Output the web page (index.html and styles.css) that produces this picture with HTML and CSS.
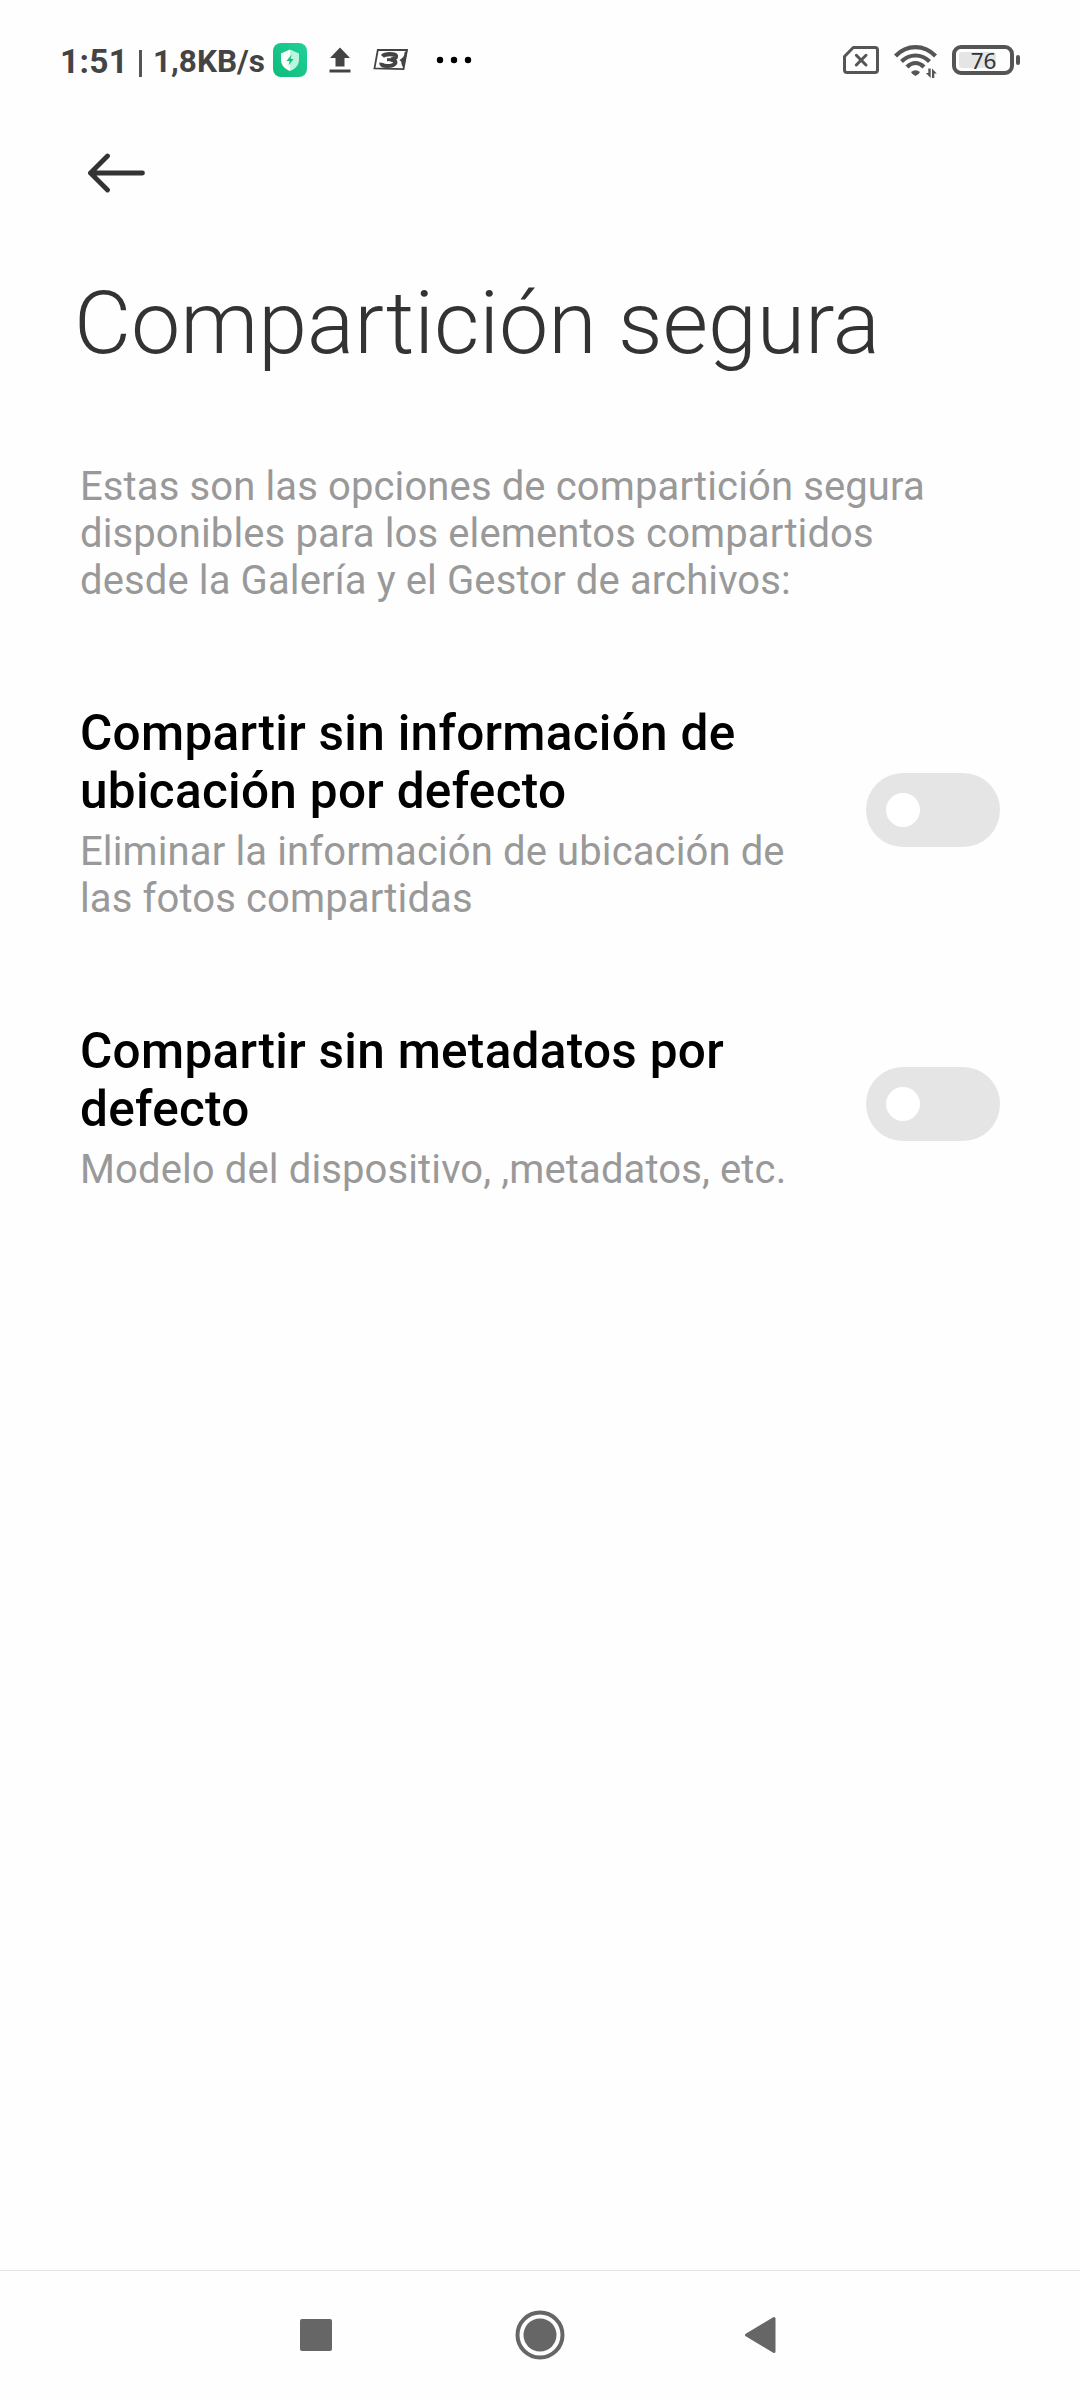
FILE: index.html
```html
<!DOCTYPE html>
<html lang="es">
<head>
<meta charset="utf-8">
<title>Compartición segura</title>
<link rel="stylesheet" href="styles.css">
</head>
<body>
<div class="screen">
  <header class="status">
    <div class="status-left">
      <span class="clock">1:51</span>
      <span class="bar"></span>
      <span class="speed">1,8KB/s</span>
      <svg class="ic-shield" width="34" height="34" viewBox="0 0 34 34">
        <defs><linearGradient id="green" x1="0" y1="1" x2="1" y2="0"><stop offset="0" stop-color="#0dbb78"/><stop offset="1" stop-color="#23d09a"/></linearGradient></defs>
        <rect width="34" height="34" rx="8" fill="url(#green)"/>
        <path d="M17 6.5 L8 10.5 V17 C8 22 12 26 17 28 Z" fill="#fff"/>
        <path d="M17 6.5 L26 10.5 V17 C26 22 22 26 17 28 Z" fill="#b9f7df"/>
        <path d="M18.6 11.5 L13.5 18 H16.6 L15.6 22.5 L20.6 16 H17.6 Z" fill="#16bd83"/>
      </svg>
      <svg class="ic-upload" width="22" height="26" viewBox="0 0 22 26">
        <path d="M11 0.5 L21 11 H15.5 V19.5 H6.5 V11 H1 Z M.5 22.5 H21.5 V25.5 H.5 Z" fill="#444"/>
      </svg>
      <svg class="ic-three" width="36" height="24" viewBox="0 0 36 24">
        <path d="M4.8 2 H34 L30.5 21.2 L1.5 20.3 Z" fill="#fff" stroke="#444" stroke-width="1.8"/>
        <path d="M34.5 1.5 L31.5 4.5 Q31.5 9.5 26.5 12 Q29 13.5 28.5 16 L30.8 21.5 Z" fill="#444"/>
        <path d="M9.5 8.3 Q11.5 6.1 17 6.1 Q23.3 6.1 23 8.6 Q22.5 11 18 11.6 Q23 12.2 22.3 15 Q21 18 14 18 Q8 18 8.3 14.8" fill="none" stroke="#444" stroke-width="4.2"/>
        <path d="M14 11.7 H20" stroke="#444" stroke-width="3"/>
      </svg>
      <svg class="ic-more" width="36" height="8" viewBox="0 0 36 8">
        <circle cx="4" cy="4" r="3.2"/><circle cx="18" cy="4" r="3.2"/><circle cx="32" cy="4" r="3.2"/>
      </svg>
    </div>
    <div class="status-right">
      <svg class="ic-sim" width="36" height="28" viewBox="0 0 36 28">
        <path d="M10.3 1.5 H32 Q34.5 1.5 34.5 4 V24 Q34.5 26.5 32 26.5 H4 Q1.5 26.5 1.5 24 V10.5 Z" fill="none" stroke="#555" stroke-width="3" stroke-linejoin="round"/>
        <path d="M13.3 9.3 L23 19 M23 9.3 L13.3 19" stroke="#555" stroke-width="3" stroke-linecap="round"/>
      </svg>
      <svg class="ic-wifi" width="43" height="33" viewBox="0 0 43 33">
        <g fill="none" stroke="#555" stroke-width="4.2">
          <path d="M1.5 11 Q10 2.100 21.5 2.100 Q33 2.100 41.500 11"/>
          <path d="M7.5 16.5 Q13.5 10.5 21.5 10.5 Q29.5 10.5 35.5 16.5"/>
          <path d="M13 22 Q17 18 21.5 18 Q26 18 30 22"/>
        </g>
        <path d="M17 27 Q21.5 23.500 26 27 Q25 29.500 21.5 31 Q18 29.500 17 27 Z" fill="#555"/>
        <path d="M34.3 23.500 H36.700 V33 L31.800 28 H34.300 Z M38 33 V23.500 L42.800 28.500 H40.300 V33 Z" fill="#555"/>
      </svg>
      <div class="battery"><span class="level"></span><span class="pct">76</span></div>
      <span class="battery-tip"></span>
    </div>
  </header>

  <nav class="topbar">
    <svg width="58" height="40" viewBox="0 0 58 40">
      <path d="M54.5 20 H2.5 M19.5 3 L2.5 20 L19.5 37" fill="none" stroke="#333" stroke-width="4.8" stroke-linecap="round" stroke-linejoin="round"/>
    </svg>
  </nav>

  <main class="content">
    <h1 class="title">Compartición segura</h1>
    <p class="intro">Estas son las opciones de compartición segura<br>disponibles para los elementos compartidos<br>desde la Galería y el Gestor de archivos:</p>
    <section class="option">
      <div class="option-text">
        <h2 class="option-title">Compartir sin información de<br>ubicación por defecto</h2>
        <p class="option-desc">Eliminar la información de ubicación de<br>las fotos compartidas</p>
      </div>
      <div class="switch"><span class="knob"></span></div>
    </section>
    <section class="option">
      <div class="option-text">
        <h2 class="option-title">Compartir sin metadatos por<br>defecto</h2>
        <p class="option-desc">Modelo del dispositivo, ,metadatos, etc.</p>
      </div>
      <div class="switch"><span class="knob"></span></div>
    </section>
  </main>

  <footer class="navbar">
    <svg width="32" height="32" viewBox="0 0 32 32"><rect width="32" height="32" rx="2" fill="#666"/></svg>
    <svg width="50" height="50" viewBox="0 0 50 50"><circle cx="25" cy="25" r="22.5" fill="none" stroke="#666" stroke-width="4"/><circle cx="25" cy="25" r="16.5" fill="#666"/></svg>
    <svg width="32" height="38" viewBox="0 0 32 38"><path d="M30 2.5 V35.5 L2.5 19 Z" fill="#666" stroke="#666" stroke-width="3" stroke-linejoin="round"/></svg>
  </footer>
</div>
</body>
</html>
```
FILE: styles.css
```css
* { box-sizing: border-box; }
body { margin: 0; background: #fefefe; font-family: Roboto, sans-serif; }
svg { display: block; flex: none; }
h1, h2, p { margin: 0; white-space: nowrap; }
.screen { width: 1080px; height: 2400px; display: flex; flex-direction: column; overflow: hidden; }

.status { height: 120px; display: flex; justify-content: space-between; padding: 0 60px; color: #444; }
.status-left, .status-right { display: flex; align-items: center; height: 120px; }
.clock { font-size: 33.5px; font-weight: 700; width: 69px; margin-top: 2px; letter-spacing: 0.3px; }
.bar { width: 3px; height: 27px; background: #555; margin: 7px 0 0 10px; }
.speed { font-size: 31.5px; font-weight: 700; width: 119px; margin: 3px 0 0 11px; white-space: nowrap; }
.ic-shield { margin-left: 1px; }
.ic-upload { margin-left: 22px; }
.ic-three { margin-left: 22px; }
.ic-more { margin-left: 27px; }
.ic-wifi { margin: 2px 0 0 15px; }
.battery { width: 62px; height: 30px; border: 4px solid #555; border-radius: 9px; margin-left: 15px; position: relative; display: flex; align-items: center; justify-content: center; }
.level { position: absolute; left: 3px; top: 3px; width: 37px; height: 16px; border-radius: 3px; background: #e5e5e5; }
.pct { position: relative; font: 22.5px "Noto Sans", sans-serif; color: #333; padding-left: 1px; }
.battery-tip { width: 4px; height: 10px; background: #555; border-radius: 2px; margin-left: 2px; }

.topbar { height: 107px; padding: 33px 0 0 88px; }

.content { flex: 1; padding: 0 80px; }
.title { font-size: 88px; font-weight: 300; line-height: 104px; letter-spacing: -0.06px; color: #333; margin: 44px 0 0 -6px; }
.intro, .option-desc { font-size: 40px; line-height: 47px; letter-spacing: 0.12px; color: #999; }
.intro { margin-top: 88px; }
.option { display: flex; align-items: center; justify-content: space-between; }
.option-text { flex: none; }
.option-title { font-size: 49.5px; line-height: 58px; font-weight: 500; letter-spacing: 0.29px; color: #000; }
.option-desc { margin-top: 8px; }
.intro + .option { margin-top: 100px; }
.option + .option { margin-top: 100px; }
.switch { width: 134px; height: 74px; border-radius: 37px; background: #e5e5e5; display: flex; align-items: center; padding-left: 20px; margin-bottom: 7px; }
.knob { width: 34px; height: 34px; border-radius: 50%; background: #fff; }

.navbar { height: 130px; border-top: 1px solid #e3e3e3; display: flex; align-items: center; padding: 0 0 1px 300px; }
.navbar svg:nth-child(2) { margin-left: 182.5px; }
.navbar svg:nth-child(3) { margin-left: 179.5px; }
```
